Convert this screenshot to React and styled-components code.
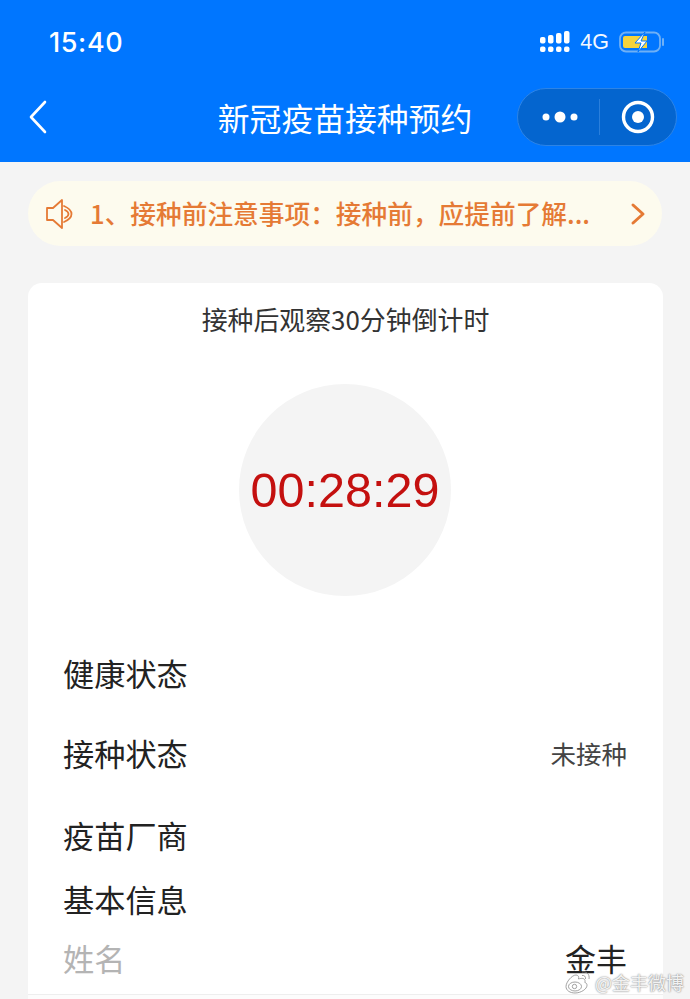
import React from 'react';
import styled, { createGlobalStyle } from 'styled-components';

const cjk = '"Noto Sans CJK SC", "Noto Sans", sans-serif';

const GlobalStyle = createGlobalStyle`
  html, body {
    margin: 0;
    padding: 0;
    height: 100%;
    background: #f4f4f4;
    overflow: hidden;
  }
`;

const Page = styled.div`
  position: relative;
  width: 690px;
  height: 999px;
  overflow: hidden;
  background: #f4f4f4;
  font-family: ${cjk};
`;

const Header = styled.header`
  height: 162px;
  background: #0076ff;
  color: #fff;
  display: flex;
  flex-direction: column;
`;

const StatusBar = styled.div`
  height: 82px;
  box-sizing: border-box;
  padding: 2px 25px 0 49px;
  display: flex;
  align-items: center;
  justify-content: space-between;
`;

const Clock = styled.span`
  font-family: "Inter", "Liberation Sans", sans-serif;
  font-size: 27px;
  font-weight: 500;
  letter-spacing: 0.6px;
`;

const StatusIcons = styled.div`
  display: flex;
  align-items: center;
  gap: 10px;
`;

const Network = styled.span`
  font-family: "Liberation Sans", sans-serif;
  font-size: 21.5px;
  opacity: 0.95;
`;

const NavBar = styled.div`
  position: relative;
  flex: 1;
  box-sizing: border-box;
  padding: 0 13px 11px 28px;
  display: flex;
  align-items: center;
  justify-content: space-between;
`;

const NavTitle = styled.h1`
  position: absolute;
  left: 0;
  right: 0;
  top: 15px;
  margin: 0;
  text-align: center;
  font-size: 31.8px;
  line-height: 40px;
  font-weight: 400;
`;

const Capsule = styled.div`
  width: 160px;
  height: 58px;
  box-sizing: border-box;
  border-radius: 29px;
  background: #0465cf;
  border: 1px solid #2d84e6;
  display: flex;
  align-items: center;
`;

const CapsulePart = styled.div`
  flex: 1;
  height: 36px;
  box-sizing: border-box;
  display: flex;
  align-items: center;
  justify-content: center;
  padding-left: ${(p) => (p.$divided ? 0 : 4)}px;
  border-left: ${(p) => (p.$divided ? '1px solid #2a7fdc' : 'none')};
`;

const Notice = styled.div`
  margin: 19px 28px 0;
  height: 65px;
  box-sizing: border-box;
  padding: 0 16px 0 18px;
  border-radius: 33px;
  background: #fdfbee;
  color: #e57a35;
  display: flex;
  align-items: center;
`;

const NoticeText = styled.span`
  flex: 1;
  margin: -2px 0 0 16px;
  font-size: 25.7px;
  font-weight: 500;
  white-space: nowrap;
  overflow: hidden;
`;

const Card = styled.section`
  margin: 37px 27px 0 28px;
  height: 712px;
  box-sizing: border-box;
  background: #fff;
  border-radius: 14px 14px 0 0;
  border-bottom: 1px solid #eeeeee;
  box-shadow: 0 5px 0 #fcfcfc;
  padding-top: 17px;
`;

const CardTitle = styled.div`
  text-align: center;
  font-size: 25.9px;
  line-height: 37px;
  color: #333;
`;

const Countdown = styled.div`
  width: 212px;
  height: 212px;
  margin: 47px 0 0 211px;
  border-radius: 50%;
  background: #f4f4f4;
  color: #c4100f;
  display: flex;
  align-items: center;
  justify-content: center;
  font-family: "Liberation Sans", sans-serif;
  font-size: 48.5px;
`;

const Fields = styled.div`
  padding: 0 36px 0 35px;
  margin-top: 36px;
`;

const Row = styled.div`
  height: ${(p) => p.$h}px;
  display: flex;
  align-items: center;
  justify-content: space-between;
`;

const Label = styled.span`
  font-size: 31.2px;
  color: ${(p) => (p.$muted ? '#b4b4b4' : '#222')};
`;

const Value = styled.span`
  font-size: ${(p) => (p.$big ? 31 : 25.5)}px;
  color: ${(p) => (p.$big ? '#222' : '#444')};
`;

const Watermark = styled.div`
  position: absolute;
  right: 6px;
  bottom: 4px;
  display: flex;
  align-items: center;
  gap: 4px;
  font-size: 18px;
  line-height: 26px;
  color: rgba(255, 255, 255, 0.9);
  text-shadow: 0 0 2px #888, 0 0 1px #aaa;
`;

function SignalIcon() {
  const tops = [6, 4, 2, 0];
  return (
    <svg width="30" height="22" viewBox="0 0 30 22" fill="#fff">
      {tops.map((top, i) => (
        <g key={top}>
          <rect x={i * 8} y={top} width="5.5" height={12.5 - top} rx="2" />
          <rect x={i * 8} y="15.500" width="5.5" height="5.5" rx="2" />
        </g>
      ))}
    </svg>
  );
}

function BatteryIcon() {
  return (
    <svg width="46" height="22" viewBox="0 0 46 22">
      <rect x="1" y="1.500" width="40" height="19" rx="6" fill="none" stroke="#6fb0f5" strokeWidth="1.8" />
      <path d="M6 5h22l-3 12H6a2 2 0 0 1-2-2V7a2 2 0 0 1 2-2z" fill="#f6d33c" />
      <rect x="23" y="5" width="5" height="12" fill="#f6d33c" />
      <path d="M44 8v6" stroke="#6fb0f5" strokeWidth="2" strokeLinecap="round" />
      <path d="M26 1 16 12h6l-3 9 9-11h-6l4-9z" fill="#fff" stroke="#0076ff" strokeWidth="1" />
    </svg>
  );
}

function BackIcon() {
  return (
    <svg width="20" height="34" viewBox="0 0 20 34" fill="none" stroke="#fff" strokeWidth="2.6" strokeLinecap="round" strokeLinejoin="round">
      <path d="M17 2 3 17l14 15" />
    </svg>
  );
}

function MoreIcon() {
  return (
    <svg width="36" height="14" viewBox="0 0 36 14" fill="#fff">
      <circle cx="4" cy="7" r="3.5" />
      <circle cx="18" cy="7" r="5.5" />
      <circle cx="32" cy="7" r="3.5" />
    </svg>
  );
}

function TargetIcon() {
  return (
    <svg width="34" height="34" viewBox="0 0 34 34">
      <circle cx="17" cy="17" r="14.5" fill="none" stroke="#fff" strokeWidth="3.4" />
      <circle cx="17" cy="17" r="6" fill="#fff" />
    </svg>
  );
}

function SpeakerIcon() {
  return (
    <svg width="28" height="30" viewBox="0 0 28 30" fill="none" stroke="#e57a35" strokeWidth="1.8" strokeLinejoin="round" strokeLinecap="round">
      <path d="M1 9h6l9-8v28l-9-8H1z" />
      <path d="M18 7c4.500 2 7.500 5 7.500 8s-3 6-7.500 8" />
      <path d="M19 11c2 1 3.500 2.500 3.500 4s-1.500 3-3.500 4" />
    </svg>
  );
}

function ChevronIcon() {
  return (
    <svg width="16" height="24" viewBox="0 0 16 24" fill="none" stroke="#e57a35" strokeWidth="3" strokeLinecap="round" strokeLinejoin="round">
      <path d="M3 3l10 9-10 9" />
    </svg>
  );
}

function WeiboIcon() {
  return (
    <svg width="26" height="24" viewBox="0 0 26 24" fill="rgba(255,255,255,0.75)" stroke="#8a8a8a" strokeWidth="0.8">
      <path d="M10 23C5 23 1 20.500 1 16.500 1 12 7 5 11 5c2.500 0 3 2 2.500 4 3-1 6-1 6.500 1.500.3 1-.3 1.800-.3 1.800 2 .7 2.300 2 2.300 3 0 3.700-6 7.700-12 7.700z" />
      <ellipse cx="10" cy="16.500" rx="6.500" ry="4.500" />
      <circle cx="9.500" cy="16.500" r="2.200" />
      <path d="M17 2c4-1 8 2 7 7M17 5.500c2-.5 4 1 3.500 3.500" fill="none" />
    </svg>
  );
}

export default function App() {
  return (
    <Page>
      <GlobalStyle />
      <Header>
        <StatusBar>
          <Clock>15:40</Clock>
          <StatusIcons>
            <SignalIcon />
            <Network>4G</Network>
            <BatteryIcon />
          </StatusIcons>
        </StatusBar>
        <NavBar>
          <BackIcon />
          <NavTitle>新冠疫苗接种预约</NavTitle>
          <Capsule>
            <CapsulePart><MoreIcon /></CapsulePart>
            <CapsulePart $divided><TargetIcon /></CapsulePart>
          </Capsule>
        </NavBar>
      </Header>
      <Notice>
        <SpeakerIcon />
        <NoticeText>1、接种前注意事项：接种前，应提前了解...</NoticeText>
        <ChevronIcon />
      </Notice>
      <Card>
        <CardTitle>接种后观察30分钟倒计时</CardTitle>
        <Countdown>00:28:29</Countdown>
        <Fields>
          <Row $h={80}><Label>健康状态</Label></Row>
          <Row $h={80}>
            <Label>接种状态</Label>
            <Value>未接种</Value>
          </Row>
          <Row $h={84}><Label>疫苗厂商</Label></Row>
          <Row $h={44}><Label>基本信息</Label></Row>
          <Row $h={74}>
            <Label $muted>姓名</Label>
            <Value $big>金丰</Value>
          </Row>
        </Fields>
      </Card>
      <Watermark>
        <WeiboIcon />
        <span>@金丰微博</span>
      </Watermark>
    </Page>
  );
}
